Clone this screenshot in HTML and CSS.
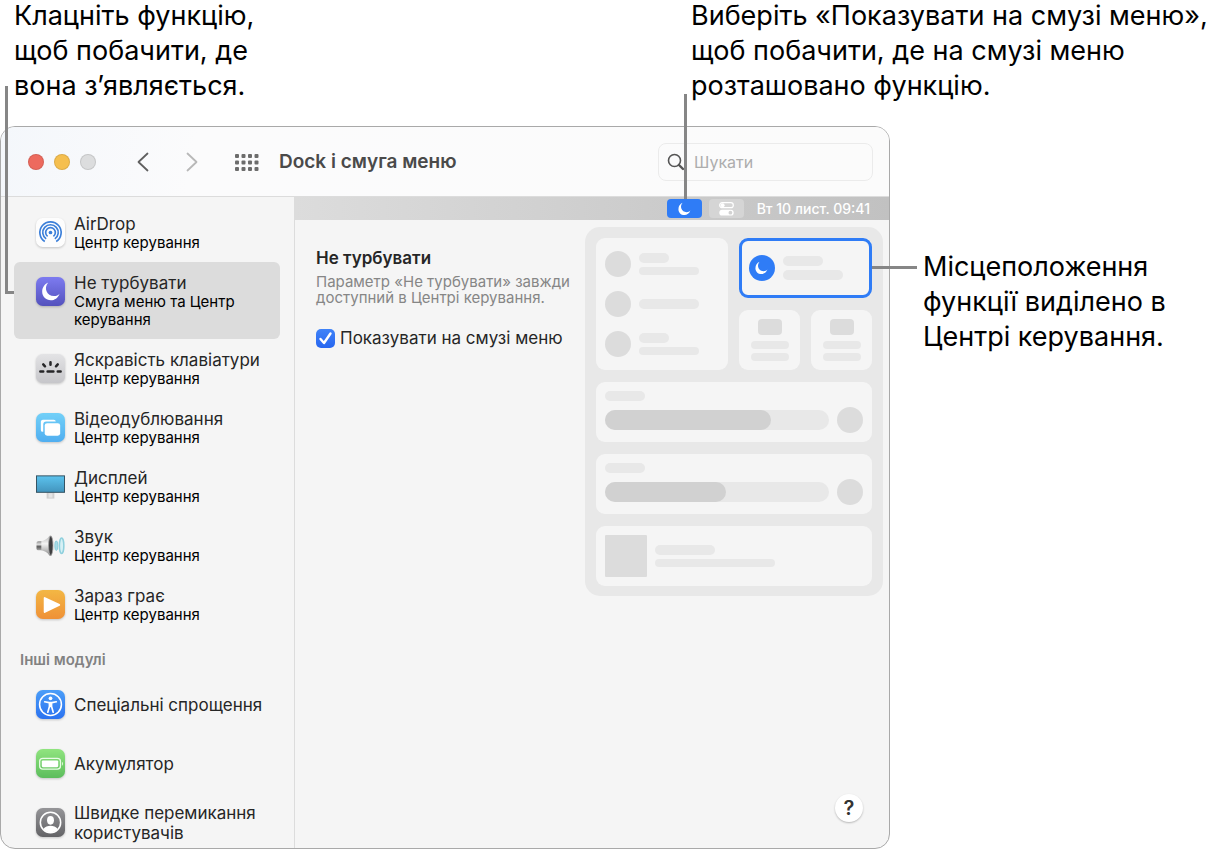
FILE: index.html
```html
<!DOCTYPE html>
<html lang="uk">
<head>
<meta charset="utf-8">
<title>Dock і смуга меню</title>
<link rel="stylesheet" href="styles.css">
</head>
<body>
<svg class="defs" width="0" height="0" aria-hidden="true">
  <defs>
    <linearGradient id="gPurple" x2="0" y2="1"><stop stop-color="#7d7bf0"/><stop offset="1" stop-color="#5452bd"/></linearGradient>
    <linearGradient id="gGray" x2="0" y2="1"><stop stop-color="#e3e3e5"/><stop offset="1" stop-color="#c6c6ca"/></linearGradient>
    <linearGradient id="gSky" x2="0" y2="1"><stop stop-color="#72d0f8"/><stop offset="1" stop-color="#50aef0"/></linearGradient>
    <linearGradient id="gScreen" x2="0" y2="1"><stop stop-color="#5cc3ee"/><stop offset="1" stop-color="#4294bd"/></linearGradient>
    <linearGradient id="gOrange" x2="0" y2="1"><stop stop-color="#f3b744"/><stop offset="1" stop-color="#ef9137"/></linearGradient>
    <linearGradient id="gBlue" x2="0" y2="1"><stop stop-color="#4b9ef8"/><stop offset="1" stop-color="#2b72f0"/></linearGradient>
    <linearGradient id="gGreen" x2="0" y2="1"><stop stop-color="#90e47f"/><stop offset="1" stop-color="#5cbd5c"/></linearGradient>
    <linearGradient id="gDark" x2="0" y2="1"><stop stop-color="#959598"/><stop offset="1" stop-color="#636366"/></linearGradient>
    <linearGradient id="gCone" x2="0" y2="1"><stop stop-color="#b5b5b5"/><stop offset=".4" stop-color="#f4f4f4"/><stop offset="1" stop-color="#8c8c8c"/></linearGradient>
    <linearGradient id="gMagnet" x2="0" y2="1"><stop stop-color="#8a8a8a"/><stop offset=".35" stop-color="#dedede"/><stop offset=".6" stop-color="#5a5a5a"/><stop offset="1" stop-color="#a8a8a8"/></linearGradient>
    <path id="moon" d="M6.6 1.2C1.600 6.800 5.200 15.200 12.600 15.200c2.600 0 4.400-.9 5.800-2.400C16.800 17.200 13.200 19.600 9.400 19.600 4.200 19.600.4 15.800.4 10.800.4 6.400 2.800 2.800 6.600 1.200z"/>
  </defs>
</svg>
<div class="page">
  <header class="callouts">
    <p class="callout callout-feature">Клацніть функцію,<br>щоб побачити, де<br>вона з’являється.</p>
    <p class="callout callout-menubar">Виберіть «Показувати на смузі меню»,<br>щоб побачити, де на смузі меню<br>розташовано функцію.</p>
  </header>

  <main class="window">
    <div class="toolbar">
      <div class="lights">
        <button class="light red" aria-label="Закрити"></button>
        <button class="light amber" aria-label="Згорнути"></button>
        <button class="light off" aria-label="Збільшити"></button>
      </div>
      <div class="arrows">
        <button class="icon-btn" aria-label="Назад"><svg width="14" height="20" viewBox="0 0 14 20"><path d="M11.500 1.500L2.500 10l9 8.500" fill="none" stroke="#606060" stroke-width="1.800" stroke-linecap="round" stroke-linejoin="round"/></svg></button>
        <button class="icon-btn" aria-label="Вперед"><svg width="14" height="20" viewBox="0 0 14 20"><path d="M2.500 1.500l9 8.500-9 8.500" fill="none" stroke="#b8b8b8" stroke-width="1.800" stroke-linecap="round" stroke-linejoin="round"/></svg></button>
      </div>
      <button class="icon-btn" aria-label="Показати все">
        <svg width="24" height="18" viewBox="0 0 24 18" fill="#6c6c6c"><g id="dots"><rect x="0" y="1" width="4" height="4" rx="1"/><rect x="6.500" y="1" width="4" height="4" rx="1"/><rect x="13" y="1" width="4" height="4" rx="1"/><rect x="19.500" y="1" width="4" height="4" rx="1"/></g><use href="#dots" y="6.500"/><use href="#dots" y="13"/></svg>
      </button>
      <h1 class="title">Dock і смуга меню</h1>
      <label class="search">
        <svg width="18" height="18" viewBox="0 0 18 18" fill="none" stroke="#555"><circle cx="7.500" cy="7.500" r="6" stroke-width="1.600"/><path d="M12 12l4 4" stroke-width="2.400" stroke-linecap="round"/></svg>
        <input class="search-input" type="search" placeholder="Шукати" aria-label="Шукати">
      </label>
    </div>

    <div class="body">
      <nav class="sidebar">
        <ul class="list">
          <li><a class="item" href="#airdrop">
            <svg class="icon" viewBox="0 0 30 30"><rect width="30" height="30" rx="7" fill="#fdfdfd"/><g fill="none" stroke="#3b7fd9" stroke-width="1.700"><path d="M9.100 24.300a11 11 0 1 1 11.800 0"/><path d="M10.500 21.600a8 8 0 1 1 9 0"/><path d="M12 19a5 5 0 1 1 6 0"/></g><circle cx="15" cy="15" r="1.900" fill="#3b7fd9"/><path d="M15 17l-5 8.500h10z" fill="#fdfdfd"/></svg>
            <span class="text"><span class="name">AirDrop</span><span class="sub">Центр керування</span></span></a></li>
          <li><a class="item selected" href="#dnd" aria-current="page">
            <svg class="icon" viewBox="0 0 30 30"><rect width="30" height="30" rx="7" fill="url(#gPurple)"/><use href="#moon" x="6" y="4.500" fill="#fff"/></svg>
            <span class="text"><span class="name">Не турбувати</span><span class="sub">Смуга меню та Центр керування</span></span></a></li>
          <li><a class="item" href="#keyboard">
            <svg class="icon" viewBox="0 0 30 30"><rect width="30" height="30" rx="7" fill="url(#gGray)"/><g stroke="#262628" stroke-width="2.600" stroke-linecap="round"><path d="M4.500 18h3M12 18h6M22.500 18h3M15 8.500v2.500M7.500 10.800l1.800 1.900M22.500 10.800l-1.800 1.900"/></g></svg>
            <span class="text"><span class="name">Яскравість клавіатури</span><span class="sub">Центр керування</span></span></a></li>
          <li><a class="item" href="#mirror">
            <svg class="icon" viewBox="0 0 30 30"><rect width="30" height="30" rx="7" fill="url(#gSky)"/><path d="M7.500 7h11a2 2 0 0 1 2 1.800H10.500a3 3 0 0 0-3 3V19.500H7a2 2 0 0 1-2-2v-8.500A2 2 0 0 1 7.500 7z" fill="#fff"/><rect x="9" y="10.500" width="16" height="13" rx="2.500" fill="#fff"/></svg>
            <span class="text"><span class="name">Відеодублювання</span><span class="sub">Центр керування</span></span></a></li>
          <li><a class="item" href="#display">
            <svg class="icon flat" viewBox="0 0 30 30"><path d="M11 21h8v6.500h-8z" fill="#cfcfcf"/><path d="M13 22h4v4.500h-4z" fill="#e4e4e4"/><rect x=".5" y="4" width="29" height="17" fill="url(#gScreen)" stroke="#33505f"/></svg>
            <span class="text"><span class="name">Дисплей</span><span class="sub">Центр керування</span></span></a></li>
          <li><a class="item" href="#sound">
            <svg class="icon flat" viewBox="0 0 30 30"><rect x=".5" y="10.500" width="7" height="9.500" rx="2" fill="url(#gMagnet)"/><path d="M5.500 10.500C9 10 12 8 14 5l2 0v20.500h-2C12 22.500 9 20.500 5.500 20z" fill="url(#gCone)"/><ellipse cx="15.300" cy="15.200" rx="2.300" ry="10" fill="#3d3d3f" stroke="#a2a2a2" stroke-width=".8"/><ellipse cx="21" cy="15.200" rx="1.600" ry="5" fill="#a5dbe6" stroke="#83c6d5" stroke-width=".8"/><ellipse cx="26.500" cy="15.200" rx="2.300" ry="8" fill="#d6f0f5" stroke="#8fd0dd" stroke-width="1.600"/></svg>
            <span class="text"><span class="name">Звук</span><span class="sub">Центр керування</span></span></a></li>
          <li><a class="item" href="#playing">
            <svg class="icon" viewBox="0 0 30 30"><rect width="30" height="30" rx="7" fill="url(#gOrange)"/><path d="M9 8.300v14.400L24 15.500z" fill="#fff" stroke="#fff" stroke-width="2" stroke-linejoin="round"/></svg>
            <span class="text"><span class="name">Зараз грає</span><span class="sub">Центр керування</span></span></a></li>
        </ul>
        <h2 class="section">Інші модулі</h2>
        <ul class="list">
          <li><a class="item simple" href="#access">
            <svg class="icon" viewBox="0 0 30 30"><rect width="30" height="30" rx="7" fill="url(#gBlue)"/><circle cx="15" cy="15" r="11.300" fill="none" stroke="#fff" stroke-width="1.600"/><circle cx="15" cy="8.600" r="1.900" fill="#fff"/><path d="M9 12.200l4.500.9h3l4.500-.9M13.900 13v4l-1.700 6M16.100 13v4l1.700 6M15 13v4" fill="none" stroke="#fff" stroke-width="1.700" stroke-linecap="round" stroke-linejoin="round"/></svg>
            <span class="text"><span class="name">Спеціальні спрощення</span></span></a></li>
          <li><a class="item simple" href="#battery">
            <svg class="icon" viewBox="0 0 30 30"><rect width="30" height="30" rx="7" fill="url(#gGreen)"/><rect x="3.800" y="9.600" width="21.500" height="11.300" rx="3.200" fill="none" stroke="#e9fbe6" stroke-width="1.300"/><rect x="6" y="11.800" width="17" height="7" rx="1.200" fill="#fff"/><path d="M26.800 13.200c1.400.5 1.400 3.600 0 4.200z" fill="#e9fbe6"/></svg>
            <span class="text"><span class="name">Акумулятор</span></span></a></li>
          <li><a class="item simple" href="#users">
            <svg class="icon" viewBox="0 0 30 30"><rect width="30" height="30" rx="7" fill="url(#gDark)"/><circle cx="15" cy="15" r="10.500" fill="none" stroke="#fff" stroke-width="1.600"/><ellipse cx="15" cy="12.800" rx="3.600" ry="4.400" fill="#fff"/><path d="M7.500 21.800c2-2.600 4.500-3.500 7.500-3.500s5.500.9 7.500 3.500a10 10 0 0 1-15 0z" fill="#fff"/></svg>
            <span class="text"><span class="name">Швидке перемикання користувачів</span></span></a></li>
        </ul>
      </nav>

      <section class="content">
        <div class="menubar">
          <span class="chip active"><svg width="13" height="14" viewBox="0 0 19 21"><use href="#moon" fill="#fff"/></svg></span>
          <span class="chip"><svg width="15" height="14" viewBox="0 0 15 14"><rect x=".7" y=".7" width="13.600" height="5" rx="2.500" fill="none" stroke="#fff" stroke-width="1.200"/><circle cx="3.600" cy="3.200" r="2" fill="#fff"/><rect x=".3" y="7.800" width="14.400" height="5.800" rx="2.900" fill="#fff"/><circle cx="11.400" cy="10.700" r="1.900" fill="#d2d2d2"/></svg></span>
          <time class="clock">Вт 10 лист. 09:41</time>
        </div>
        <div class="pane">
          <div class="settings">
            <h2 class="heading">Не турбувати</h2>
            <p class="note">Параметр «Не турбувати» завжди доступний в Центрі керування.</p>
            <label class="check"><input class="box" type="checkbox" checked><svg class="tick" width="19" height="19" viewBox="0 0 19 19" aria-hidden="true"><path d="M4.500 10l3.500 4 6.500-9.500" fill="none" stroke="#fff" stroke-width="2.400" stroke-linecap="round" stroke-linejoin="round"/></svg><span>Показувати на смузі меню</span></label>
          </div>
          <div class="center">
            <div class="card toggles">
              <div class="row"><i class="dot"></i><span class="lines"><i class="bar short"></i><i class="bar thin"></i></span></div>
              <div class="row"><i class="dot"></i><span class="lines"><i class="bar"></i></span></div>
              <div class="row"><i class="dot"></i><span class="lines"><i class="bar short"></i><i class="bar thin"></i></span></div>
            </div>
            <div class="card highlight">
              <svg width="26" height="26" viewBox="0 0 26 26"><circle cx="13" cy="13" r="13" fill="#2f7cf6"/><svg x="6" y="6" width="13" height="14" viewBox="0 0 19 21"><use href="#moon" fill="#fff"/></svg></svg>
              <span class="lines"><i class="bar medium"></i><i class="bar"></i></span>
            </div>
            <div class="card tile"><i class="block"></i><i class="bar thin"></i><i class="bar thin"></i></div>
            <div class="card tile"><i class="block"></i><i class="bar thin"></i><i class="bar thin"></i></div>
            <div class="card slider"><i class="bar medium"></i><div class="row"><span class="track"><i class="fill" style="width:74%"></i></span><i class="dot"></i></div></div>
            <div class="card slider"><i class="bar medium"></i><div class="row"><span class="track"><i class="fill" style="width:54%"></i></span><i class="dot"></i></div></div>
            <div class="card media"><i class="cover"></i><span class="lines"><i class="bar"></i><i class="bar thin long"></i></span></div>
          </div>
        </div>
        <button class="help" aria-label="Довідка">?</button>
      </section>
    </div>
  </main>

  <aside class="side">
    <p class="callout callout-center">Місцеположення<br>функції виділено в<br>Центрі керування.</p>
  </aside>
</div>
</body>
</html>
```
FILE: styles.css
```css
* { box-sizing: border-box; }
body {
  margin: 0;
  background: #fff;
  color: #000;
  font-family: Inter, "Liberation Sans", sans-serif;
}
h1, h2, p, ul { margin: 0; padding: 0; }
ul { list-style: none; }
button { border: 0; padding: 0; background: none; font: inherit; }
i { display: block; }
svg { display: block; flex: none; }
.defs { position: absolute; }

.page {
  display: grid;
  grid-template-columns: minmax(0, 1fr) 339px;
  grid-template-rows: auto minmax(0, 1fr);
  height: 100vh;
}

/* Callouts and their leader lines */
.callouts {
  grid-column: 1 / -1;
  display: flex;
  justify-content: space-between;
  margin-top: -2px;
  padding: 0 0 23px 14px;
}
.callout {
  position: relative;
  z-index: 2;
  font-size: 27px;
  line-height: 35px;
  white-space: nowrap;
}
.callout-menubar { width: 538px; }
.callout::before {
  content: "";
  position: absolute;
  background: #868686;
}
.callout-feature::before {
  left: -9px;
  top: 88px;
  width: 6px;
  height: 205px;
  background: none;
  border: solid #868686;
  border-width: 0 0 3px 3px;
}
.callout-menubar::before { left: -7px; top: 96px; width: 3px; height: 105px; }
.side { padding: 123px 0 0 33px; }
.callout-center::before { left: -51px; top: 17px; width: 45px; height: 3px; }

/* Window */
.window {
  display: flex;
  flex-direction: column;
  border: 1px solid #a9a9a9;
  border-radius: 15px;
  overflow: hidden;
  background: #f5f5f5;
}
.toolbar {
  display: flex;
  flex: none;
  align-items: center;
  height: 70px;
  padding: 0 16px 0 27px;
  border-bottom: 1px solid #dcdcdc;
  background: linear-gradient(100deg, #f4f7fb, #fbfbfc 22%, #fbfbfb);
}
.lights { display: flex; gap: 10px; }
.light { width: 16px; height: 16px; border-radius: 50%; border: 1px solid #0000001a; }
.red { background: #ed6a5e; }
.amber { background: #f5bf4f; }
.off { background: #dcddde; }
.arrows { display: flex; gap: 35px; margin: 0 36px 0 40px; }
.title { margin-left: 20px; font-size: 19px; font-weight: 600; color: #4a4a4a; }
.search {
  display: flex;
  align-items: center;
  gap: 9px;
  width: 215px;
  height: 38px;
  margin-left: auto;
  padding: 0 8px;
  border: 1px solid #ebebeb;
  border-radius: 8px;
}
.search-input {
  min-width: 0;
  flex: 1;
  border: 0;
  padding: 0;
  outline: 0;
  background: none;
  font: 16px Inter, sans-serif;
}
.search-input::placeholder { color: #adadad; opacity: 1; }
.body { flex: 1; display: flex; min-height: 0; }

/* Sidebar */
.sidebar {
  width: 294px;
  flex: none;
  overflow: hidden;
  padding: 6px 14px 0 13px;
  border-right: 1px solid #dcdcdc;
}
.item {
  display: flex;
  align-items: flex-start;
  gap: 9px;
  min-height: 59px;
  padding: 11px 20px 10px 22px;
  border-radius: 6px;
  color: #262626;
  text-decoration: none;
}
.selected { background: #dcdcdc; }
.icon {
  width: 29px;
  height: 29px;
  margin-top: 4px;
  filter: drop-shadow(0 1px 1px #00000033);
}
.flat { filter: none; }
.name, .sub { display: block; }
.name { font-size: 17px; line-height: 20px; }
.sub { font-size: 15px; line-height: 18px; color: #000; }
.simple { align-items: center; padding: 8px 8px 8px 22px; }
.simple .icon { margin-top: 0; }
.section {
  padding: 16px 6px 5px;
  font-size: 15px;
  line-height: 20px;
  font-weight: 600;
  color: #828282;
}

/* Content */
.content { flex: 1; min-width: 0; display: flex; flex-direction: column; }
.menubar {
  display: flex;
  justify-content: flex-end;
  align-items: center;
  gap: 7px;
  height: 23px;
  padding-right: 19px;
  background: linear-gradient(90deg, #dcdcdc, #c1c1c1);
}
.chip {
  display: grid;
  place-items: center;
  width: 35px;
  height: 19px;
  border-radius: 4px;
  background: #d5d5d5;
}
.active { background: #2f7cf6; }
.clock { margin-left: 6px; font-size: 14px; font-weight: 500; color: #fff; }
.pane {
  display: flex;
  justify-content: space-between;
  padding: 7px 6px 0 21px;
}
.settings { width: 264px; padding-top: 20px; }
.heading { font-size: 17px; line-height: 22px; font-weight: 600; color: #262626; }
.note { margin-top: 5px; font-size: 15px; line-height: 16px; color: #868686; }
.check {
  position: relative;
  display: flex;
  align-items: center;
  gap: 5px;
  margin-top: 22px;
  font-size: 17px;
  line-height: 20px;
  color: #262626;
  white-space: nowrap;
}
.box {
  appearance: none;
  width: 19px;
  height: 19px;
  margin: 0;
  border: 1px solid #c4c4c4;
  border-radius: 5px;
  background: #fff;
}
.box:checked { border: 0; background: linear-gradient(#3f83f8, #2766f0); }
.tick { position: absolute; left: 0; visibility: hidden; pointer-events: none; }
.box:checked + .tick { visibility: visible; }

/* Control Center schematic */
.center {
  display: grid;
  grid-template-columns: 132px 61px 61px;
  grid-auto-rows: 60px;
  gap: 12px 11px;
  padding: 11px 11px 10px;
  border-radius: 15px;
  background: #e8e8e8;
}
.card { border-radius: 9px; background: #f5f5f5; }
.row { display: flex; align-items: center; }
.dot { width: 26px; height: 26px; border-radius: 50%; background: #dcdcdc; }
.lines { display: grid; gap: 4px; }
.bar { width: 60px; height: 10px; border-radius: 5px; background: #e8e8e8; }
.short { width: 30px; }
.medium { width: 40px; }
.long { width: 120px; }
.thin { height: 8px; }
.toggles {
  grid-row: span 2;
  display: flex;
  flex-direction: column;
  justify-content: center;
  gap: 14px;
  padding-left: 9px;
}
.toggles .row { gap: 8px; }
.highlight {
  grid-column: span 2;
  display: flex;
  align-items: center;
  gap: 8px;
  padding-left: 7px;
  border: 3px solid #2f7cf6;
}
.tile { display: flex; flex-direction: column; align-items: center; gap: 4px; padding-top: 9px; }
.block { width: 24px; height: 16px; margin-bottom: 2px; border-radius: 4px; background: #dcdcdc; }
.tile .bar { width: 38px; }
.slider, .media { grid-column: 1 / -1; padding: 9px; }
.slider .row { gap: 8px; margin-top: 6px; }
.track { flex: 1; height: 20px; border-radius: 10px; background: #e8e8e8; }
.fill { height: 20px; border-radius: 10px; background: #d1d1d1; }
.media { display: flex; align-items: center; gap: 8px; }
.cover { width: 42px; height: 42px; border-radius: 1px; background: #dcdcdc; }

.help {
  width: 28px;
  height: 28px;
  margin: auto 26px 26px auto;
  border-radius: 50%;
  background: #fff;
  box-shadow: 0 1px 2px #00000040;
  font-size: 20px;
  line-height: 28px;
  font-weight: 600;
  color: #333;
}
```
